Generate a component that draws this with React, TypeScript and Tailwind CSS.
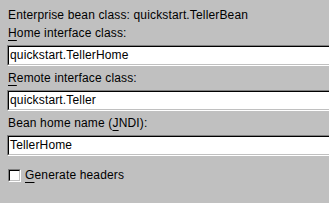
import React from 'react';

const Mnemonic: React.FC<{ text: string; index: number }> = ({ text, index }) => (
  <>
    {text.slice(0, index)}
    <span className="underline decoration-1 underline-offset-[3px]">{text[index]}</span>
    {text.slice(index + 1)}
  </>
);

const Field: React.FC<{ value: string }> = ({ value }) => (
  <div className="ml-[7px] w-[340px] border-t border-l border-t-[#808080] border-l-[#808080] border-b border-r border-b-white border-r-white">
    <div className="h-[19px] bg-white border-t border-l border-t-black border-l-black border-b border-r border-b-[#c0c0c0] border-r-[#c0c0c0] pl-[1px] leading-[17px]">
      {value}
    </div>
  </div>
);

function App() {
  return (
    <div
      className="w-[329px] h-[203px] overflow-hidden bg-[#c0c0c0] text-black text-[12px] tracking-[0.15px]"
      style={{ fontFamily: '"Liberation Sans", Arial, sans-serif' }}
    >
      <div className="pt-[8px] pl-[8px] leading-[15px]">Enterprise bean class: quickstart.TellerBean</div>

      <div className="mt-[3px] pl-[8px] h-[19px] leading-[15px]">
        <Mnemonic text="Home interface class:" index={0} />
      </div>
      <Field value="quickstart.TellerHome" />

      <div className="mt-[5px] pl-[8px] h-[19px] leading-[15px]">
        <Mnemonic text="Remote interface class:" index={0} />
      </div>
      <Field value="quickstart.Teller" />

      <div className="mt-[5px] pl-[8px] h-[19px] leading-[15px]">
        <Mnemonic text="Bean home name (JNDI):" index={16} />
      </div>
      <Field value="TellerHome" />

      <div className="mt-[12px] pl-[8px] flex items-center gap-[4px]">
        <div className="w-[13px] h-[13px] border-t border-l border-t-[#808080] border-l-[#808080] border-b border-r border-b-white border-r-white">
          <div className="w-full h-full bg-white border-t border-l border-t-black border-l-black border-b border-r border-b-[#c0c0c0] border-r-[#c0c0c0]" />
        </div>
        <span className="leading-[15px]">
          <Mnemonic text="Generate headers" index={0} />
        </span>
      </div>
    </div>
  );
}

export default App;
